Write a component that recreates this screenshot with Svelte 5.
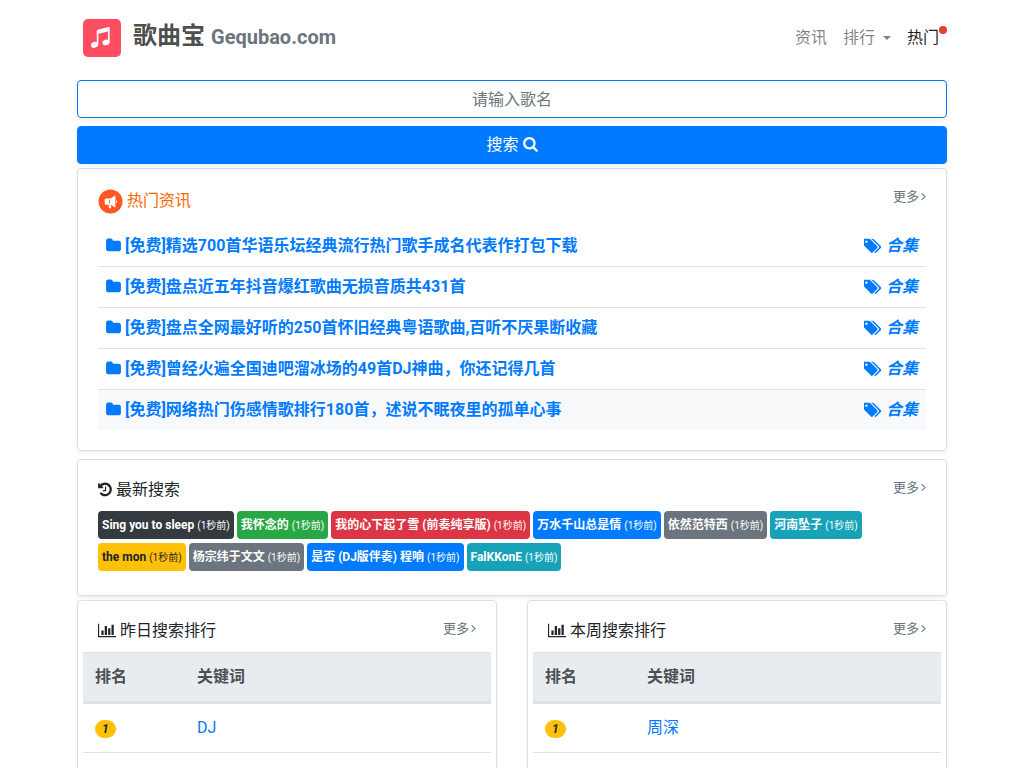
<script lang="ts">
	let query = $state('');

	const news = [
		'[免费]精选700首华语乐坛经典流行热门歌手成名代表作打包下载',
		'[免费]盘点近五年抖音爆红歌曲无损音质共431首',
		'[免费]盘点全网最好听的250首怀旧经典粤语歌曲,百听不厌果断收藏',
		'[免费]曾经火遍全国迪吧溜冰场的49首DJ神曲，你还记得几首',
		'[免费]网络热门伤感情歌排行180首，述说不眠夜里的孤单心事'
	];
	let activeRow = $state(news.length - 1);

	const recent = [
		{ name: 'Sing you to sleep', color: 'dark' },
		{ name: '我怀念的', color: 'success' },
		{ name: '我的心下起了雪 (前奏纯享版)', color: 'danger' },
		{ name: '万水千山总是情', color: 'primary' },
		{ name: '依然范特西', color: 'secondary' },
		{ name: '河南坠子', color: 'info' },
		{ name: 'the mon', color: 'warning' },
		{ name: '杨宗纬于文文', color: 'secondary' },
		{ name: '是否 (DJ版伴奏) 程响', color: 'primary' },
		{ name: 'FalKKonE', color: 'info' }
	];

	const rankings = [
		{ title: '昨日搜索排行', rows: ['DJ'] },
		{ title: '本周搜索排行', rows: ['周深'] }
	];
</script>

{#snippet more()}
	<a class="more" href="#more">
		更多
		<svg width="5" height="13" viewBox="560 64 640 1792" aria-hidden="true">
			<path d="M1171 960q0 13-10 23l-466 466q-10 10-23 10t-23-10l-50-50q-10-10-10-23t10-23l393-393-393-393q-10-10-10-23t10-23l50-50q10-10 23-10t23 10l466 466q10 10 10 23z" />
		</svg>
	</a>
{/snippet}

<div class="container">
	<header class="navbar">
		<a class="brand" href="#home">
			<svg class="logo" width="40" height="40" viewBox="0 0 40 40" aria-hidden="true">
				<rect x="1" y="1" width="38" height="38" rx="5" fill="#ff4d62" />
				<path d="M15.6 26V13.6L26.8 11v13.4" fill="none" stroke="#fff" stroke-width="1.6" stroke-linejoin="round" />
				<path d="M14.8 13q0-1 1-1.300l10.600-2.700q1.200-.3 1.200.9v3.200l-12.800 3.200z" fill="#fff" />
				<ellipse cx="12.6" cy="26.800" rx="3.700" ry="2.900" fill="#fff" transform="rotate(-20 12.6 26.8)" />
				<ellipse cx="24" cy="24.400" rx="3.600" ry="2.800" fill="#fff" transform="rotate(-20 24 24.4)" />
			</svg>
			<span class="brand-name">歌曲宝</span>
			<span class="brand-domain">Gequbao.com</span>
		</a>
		<nav>
			<a href="#news">资讯</a>
			<a class="dropdown" href="#rank">排行</a>
			<a class="active" href="#hot">热门<span class="dot"></span></a>
		</nav>
	</header>

	<form class="search" onsubmit={(e) => e.preventDefault()}>
		<input type="text" aria-label="歌名" placeholder="请输入歌名" bind:value={query} />
		<button type="submit">
			搜索
			<svg width="15" height="16" viewBox="64 128 1664 1792" aria-hidden="true">
				<path d="M1216 832q0-185-131.500-316.500t-316.500-131.500-316.500 131.500-131.500 316.500 131.500 316.500 316.500 131.500 316.500-131.500 131.500-316.500zm512 832q0 52-38 90t-90 38q-54 0-90-38l-343-342q-179 124-399 124-143 0-273.500-55.500t-225-150-150-225-55.500-273.500 55.500-273.500 150-225 225-150 273.500-55.500 273.500 55.500 225 150 150 225 55.500 273.500q0 220-124 399l343 343q37 37 37 90z" />
			</svg>
		</button>
	</form>

	<section class="card news">
		<div class="card-head">
			<h2 class="hot">
				<svg width="25" height="25" viewBox="0 0 25 25" aria-hidden="true">
					<circle cx="12.5" cy="12.5" r="12" fill="#ff5722" />
					<path d="M8 9.5h3.200q3-.3 5.300-2.700h.9v11.400h-.9q-2.300-2.200-5.300-2.500H8q-1.300 0-1.300-1.200v-3.800q0-1.200 1.300-1.200z" fill="#fff" />
					<path d="M18 10.900c1.300.5 1.300 2.700 0 3.200z" fill="#fff" />
					<path d="M10.600 16.300h2.200l.5 2.700-1.600.6-1.100-1.200z" fill="#fff" />
					<path d="M11.400 10.600v3.600" stroke="#ff5722" stroke-width="1" />
				</svg>
				热门资讯
			</h2>
			{@render more()}
		</div>
		<table class="news-table">
			<tbody>
				{#each news as title, i}
					<tr class:hover={i === activeRow} onmouseenter={() => (activeRow = i)}>
						<td>
							<a href="#news-{i}">
								<svg width="15" height="16" viewBox="64 64 1664 1792" aria-hidden="true">
									<path d="M1728 608v704q0 92-66 158t-158 66h-1216q-92 0-158-66t-66-158v-960q0-92 66-158t158-66h320q92 0 158 66t66 158v32h672q92 0 158 66t66 158z" />
								</svg>
								{title}
							</a>
						</td>
						<td class="tag">
							<a href="#tag-{i}">
								<svg width="18" height="17" viewBox="0 64 1920 1792" aria-hidden="true">
									<path d="M384 448q0-53-37.500-90.500t-90.500-37.500-90.500 37.500-37.500 90.500 37.500 90.500 90.500 37.500 90.500-37.500 37.500-90.500zm1067 576q0 53-37 90l-491 492q-39 37-91 37-53 0-90-37l-715-716q-38-37-64.500-101t-26.500-117v-416q0-52 38-90t90-38h416q53 0 117 26.500t102 64.500l715 714q37 39 37 91zm384 0q0 53-37 90l-491 492q-39 37-91 37-36 0-59-14t-53-45l470-470q37-37 37-90 0-52-37-91l-715-714q-38-38-102-64.500t-117-26.500h224q53 0 117 26.500t102 64.500l715 714q37 39 37 91z" />
								</svg>
								<em>合集</em>
							</a>
						</td>
					</tr>
				{/each}
			</tbody>
		</table>
	</section>

	<section class="card recent">
		<div class="card-head">
			<h2>
				<svg width="14" height="16" viewBox="128 64 1536 1792" aria-hidden="true">
					<path d="M1664 896q0 156-61 298t-164 245-245 164-298 61q-172 0-327-72.500t-264-204.500q-7-10-6.500-22.500t8.500-20.500l137-138q10-9 25-9 16 2 23 12 73 95 179 147t225 52q104 0 198.500-40.500t163.500-109.500 109.500-163.500 40.500-198.500-40.500-198.500-109.500-163.500-163.500-109.500-198.500-40.500q-98 0-188 35.500t-160 101.500l137 138q31 30 14 69-17 40-59 40h-448q-26 0-45-19t-19-45v-448q0-42 40-59 39-17 69 14l130 129q107-101 244.500-156.500t284.500-55.500q156 0 298 61t245 164 164 245 61 298zm-640-288v448q0 14-9 23t-23 9h-320q-14 0-23-9t-9-23v-64q0-14 9-23t23-9h224v-352q0-14 9-23t23-9h64q14 0 23 9t9 23z" />
				</svg>
				最新搜索
			</h2>
			{@render more()}
		</div>
		<div class="badges">
			{#each recent as item}
				<a class="badge {item.color}" href="#s">{item.name} <small>(1秒前)</small></a>
			{/each}
		</div>
	</section>

	<div class="row">
		{#each rankings as ranking}
			<section class="card ranking">
				<div class="card-head">
					<h2>
						<svg width="18" height="16" viewBox="0 64 2048 1792" aria-hidden="true">
							<path d="M640 896v512h-256v-512h256zm384-512v1024h-256v-1024h256zm1024 1152v128h-2048v-1536h128v1408h1920zm-640-896v768h-256v-768h256zm384-384v1152h-256v-1152h256z" />
						</svg>
						{ranking.title}
					</h2>
					{@render more()}
				</div>
				<table class="rank-table">
					<thead>
						<tr>
							<th scope="col">排名</th>
							<th scope="col">关键词</th>
						</tr>
					</thead>
					<tbody>
						{#each ranking.rows as keyword, i}
							<tr>
								<td><em class="pill">{i + 1}</em></td>
								<td><a href="#k">{keyword}</a></td>
							</tr>
						{/each}
					</tbody>
				</table>
			</section>
		{/each}
	</div>
</div>

<style>
	:global(body) {
		font-family: Roboto, 'Noto Sans CJK SC', sans-serif;
		font-size: 16px;
		line-height: 24px;
		color: #212529;
		background: #fff;
	}

	:global(*) {
		box-sizing: border-box;
	}

	a {
		color: #007bff;
		text-decoration: none;
	}

	svg {
		fill: currentColor;
		flex: none;
	}

	.container {
		max-width: 900px;
		margin: 0 auto;
		padding: 0 15px;
	}

	.navbar {
		display: flex;
		align-items: center;
		justify-content: space-between;
		height: 76px;
		margin-bottom: 4px;
		padding-left: 5px;
	}

	.brand {
		display: flex;
		align-items: center;
		font-weight: 700;
	}

	.brand-name {
		margin: 0 6px 4px 11px;
		font-size: 24px;
		line-height: 30px;
		color: #4f4f4f;
	}

	.brand-domain {
		font-size: 20px;
		line-height: 26px;
		margin-bottom: 2px;
		color: #6c757d;
	}

	nav {
		display: flex;
	}

	nav a {
		position: relative;
		padding: 8px;
		color: rgba(0, 0, 0, 0.5);
	}

	nav a.active {
		color: rgba(0, 0, 0, 0.9);
	}

	.dropdown {
		display: flex;
		align-items: center;
		gap: 8px;
	}

	.dropdown::after {
		content: '';
		border-top: 4px solid;
		border-left: 4px solid transparent;
		border-right: 4px solid transparent;
	}

	.dot {
		position: absolute;
		top: 8px;
		right: 0;
		width: 8px;
		height: 8px;
		border-radius: 50%;
		background: #e33e33;
	}

	.search {
		display: grid;
		gap: 8px;
		margin-bottom: 4px;
	}

	.search input,
	.search button {
		width: 100%;
		height: 38px;
		border: 1px solid #007bff;
		border-radius: 4px;
		font: inherit;
		box-shadow: 0 2px 4px rgba(0, 0, 0, 0.075);
	}

	.search input {
		padding: 6px 12px;
		text-align: center;
		color: #495057;
	}

	.search input::placeholder {
		color: #6c757d;
		opacity: 1;
	}

	.search button {
		display: flex;
		align-items: center;
		justify-content: center;
		gap: 4px;
		color: #fff;
		background: #007bff;
		cursor: pointer;
	}

	.card {
		padding: 20px;
		border: 1px solid #dfdfdf;
		border-radius: 4px;
		background: #fff;
		box-shadow: 0 2px 4px rgba(0, 0, 0, 0.075);
	}

	.card-head {
		display: flex;
		align-items: flex-start;
		justify-content: space-between;
		margin-bottom: 12px;
	}

	h2 {
		display: flex;
		align-items: center;
		gap: 4px;
		margin: 0;
		font-size: 16px;
		font-weight: 400;
		line-height: 19px;
	}

	h2.hot {
		line-height: 24px;
		height: 24px;
		color: #ff6600;
	}

	.more {
		display: flex;
		align-items: center;
		gap: 2px;
		font-size: 13px;
		line-height: 15px;
		color: #6c757d;
	}

	.news {
		margin-bottom: 8px;
	}

	table {
		width: 100%;
		border-collapse: separate;
		border-spacing: 0;
	}

	.news-table td {
		padding: 8px;
		border-top: 1px solid #dee2e6;
		font-weight: 700;
	}

	.news-table tr:first-child td {
		border-top-color: transparent;
	}

	.news-table tr.hover {
		background: #f8f9fa;
	}

	.news-table a {
		display: flex;
		align-items: center;
		gap: 4px;
	}

	.news-table .tag a {
		justify-content: flex-end;
	}

	.recent {
		margin-bottom: 4px;
		padding-bottom: 24px;
	}

	.badges {
		display: flex;
		flex-wrap: wrap;
		gap: 4px 3px;
	}

	.badge {
		height: 28px;
		padding: 0 4px;
		border-radius: 4px;
		font-size: 12px;
		font-weight: 700;
		line-height: 28px;
		white-space: nowrap;
		color: #fff;
	}

	.badge small {
		font-size: 10px;
		font-weight: 400;
		line-height: 12px;
	}

	.dark {
		background: #343a40;
	}

	.success {
		background: #28a745;
	}

	.danger {
		background: #dc3545;
	}

	.primary {
		background: #007bff;
	}

	.secondary {
		background: #6c757d;
	}

	.info {
		background: #17a2b8;
	}

	.warning {
		color: #212529;
		background: #ffc107;
	}

	.row {
		display: grid;
		grid-template-columns: 1fr 1fr;
		gap: 30px;
	}

	.ranking {
		padding: 20px 5px;
	}

	.ranking .card-head {
		padding: 0 15px;
	}

	.rank-table {
		table-layout: fixed;
		border-bottom: 1px solid #dee2e6;
	}

	.rank-table th,
	.rank-table td {
		padding: 12px;
		border-top: 1px solid #dee2e6;
		text-align: left;
	}

	.rank-table th {
		border-bottom: 2px solid #dee2e6;
		color: #495057;
		background: #e9ecef;
	}

	.rank-table th:first-child {
		width: 25%;
	}

	.pill {
		display: inline-block;
		padding: 3px 7px;
		border-radius: 10px;
		font-size: 12px;
		font-weight: 700;
		line-height: 12px;
		background: #ffc107;
	}
</style>
